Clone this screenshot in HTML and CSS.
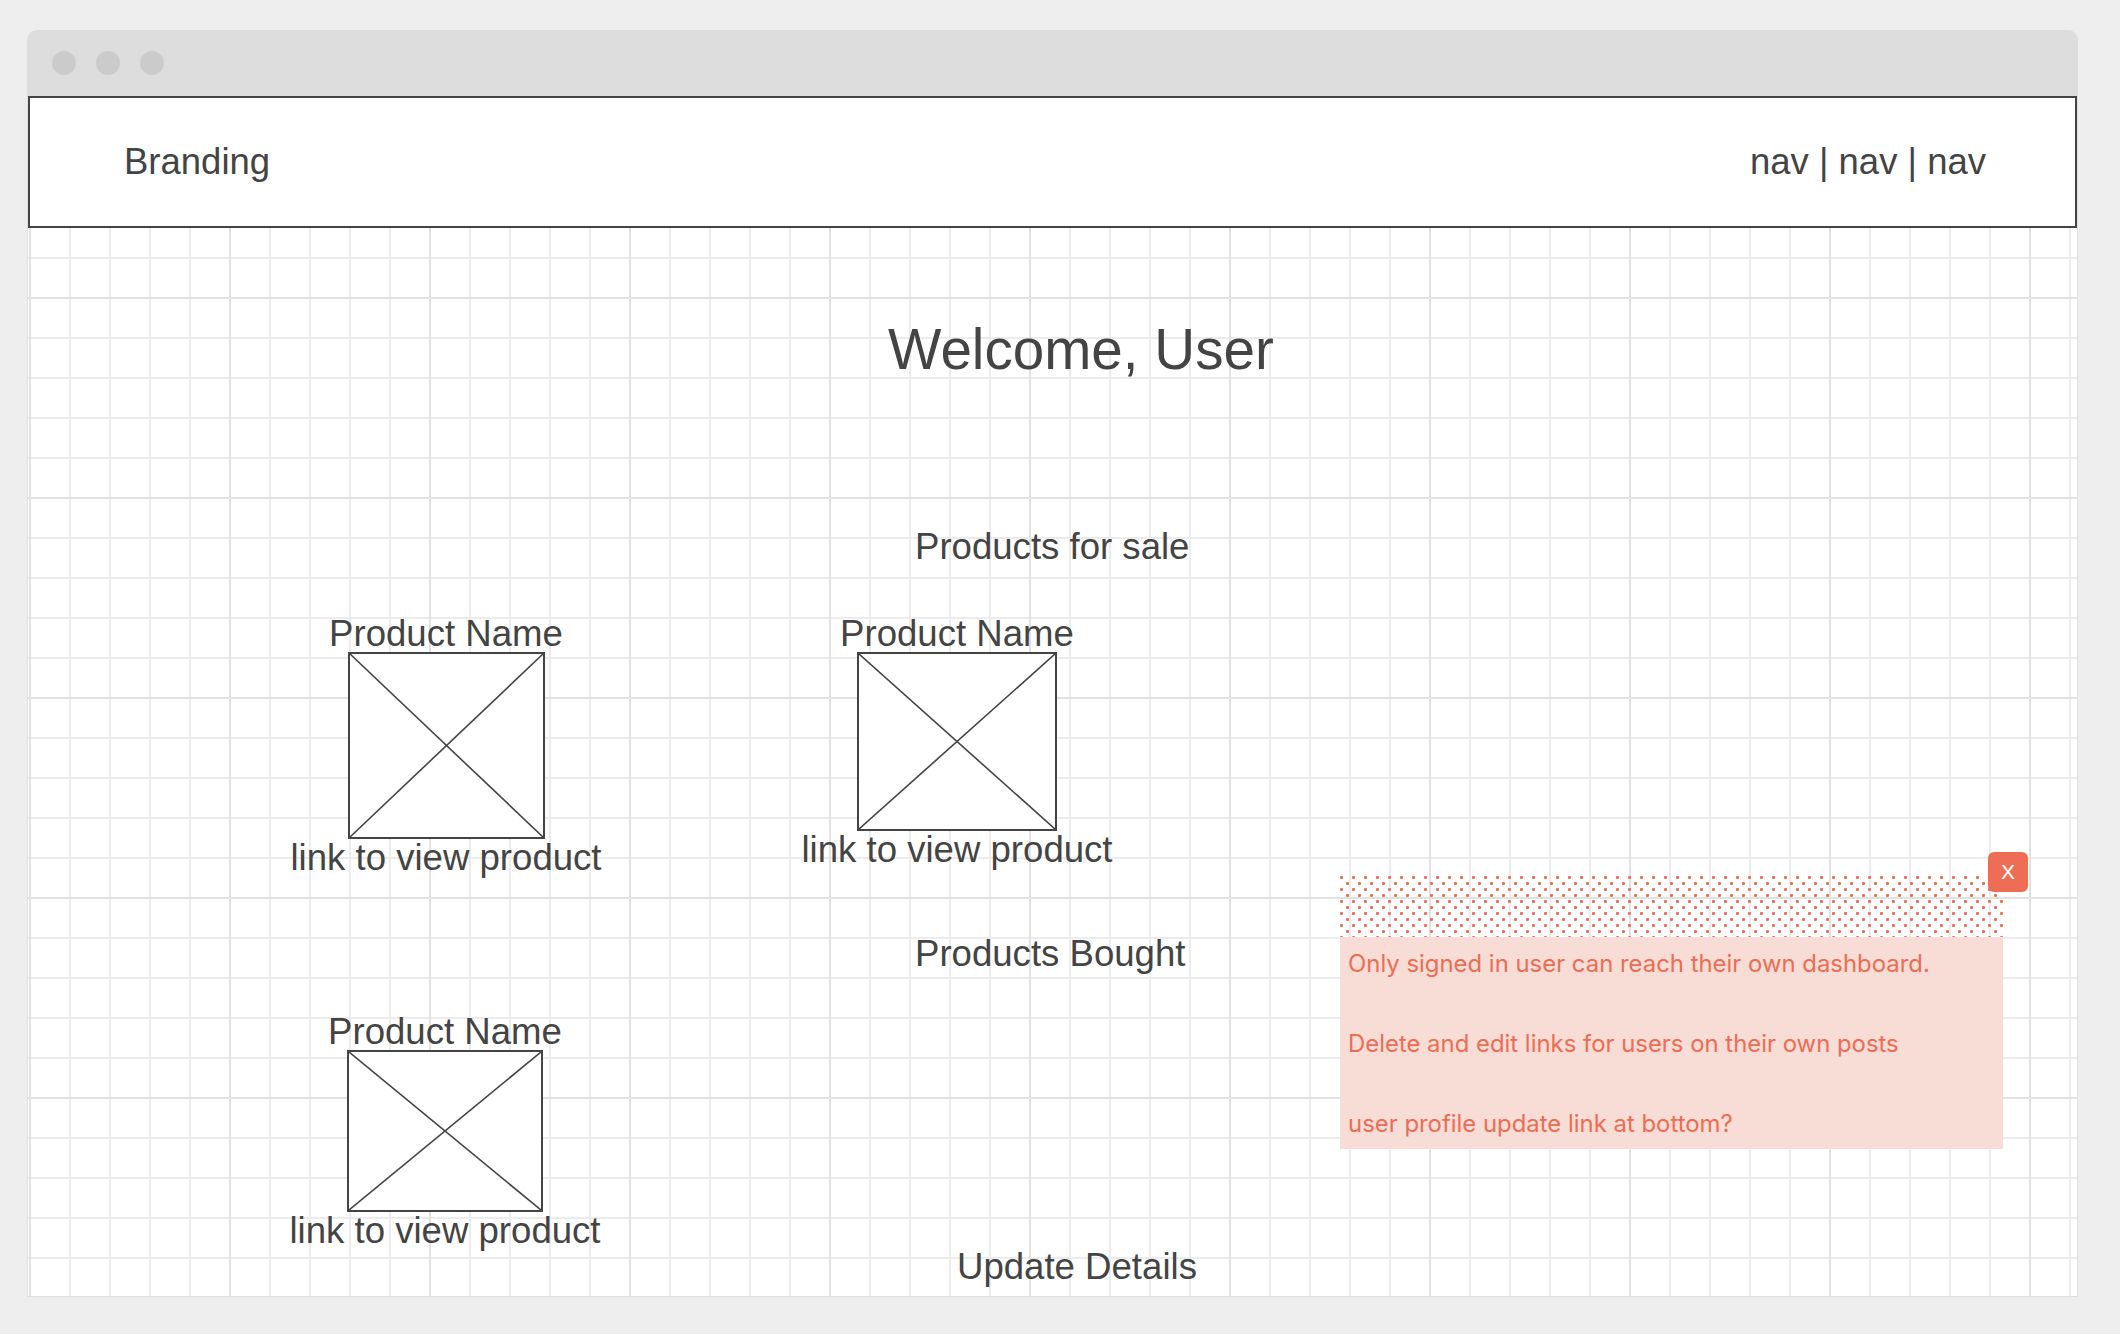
FILE: index.html
```html
<!DOCTYPE html>
<html lang="en">
<head>
<meta charset="utf-8">
<title>Dashboard wireframe</title>
<link rel="stylesheet" href="styles.css">
</head>
<body>
<div class="window">
  <div class="titlebar">
    <span class="dot"></span>
    <span class="dot"></span>
    <span class="dot"></span>
  </div>
  <div class="canvas">
    <header class="site-header">
      <div class="brand">Branding</div>
      <nav class="nav">nav | nav | nav</nav>
    </header>

    <h1 class="label welcome">Welcome, User</h1>
    <h2 class="label section sale">Products for sale</h2>

    <div class="product p1">
      <div class="product-name">Product Name</div>
      <div class="placeholder ph1">
        <svg viewBox="0 0 100 100" preserveAspectRatio="none"><line x1="0" y1="0" x2="100" y2="100" vector-effect="non-scaling-stroke"/><line x1="100" y1="0" x2="0" y2="100" vector-effect="non-scaling-stroke"/></svg>
      </div>
      <div class="product-link">link to view product</div>
    </div>

    <div class="product p2">
      <div class="product-name">Product Name</div>
      <div class="placeholder ph2">
        <svg viewBox="0 0 100 100" preserveAspectRatio="none"><line x1="0" y1="0" x2="100" y2="100" vector-effect="non-scaling-stroke"/><line x1="100" y1="0" x2="0" y2="100" vector-effect="non-scaling-stroke"/></svg>
      </div>
      <div class="product-link">link to view product</div>
    </div>

    <h2 class="label section bought">Products Bought</h2>

    <div class="product p3">
      <div class="product-name">Product Name</div>
      <div class="placeholder ph3">
        <svg viewBox="0 0 100 100" preserveAspectRatio="none"><line x1="0" y1="0" x2="100" y2="100" vector-effect="non-scaling-stroke"/><line x1="100" y1="0" x2="0" y2="100" vector-effect="non-scaling-stroke"/></svg>
      </div>
      <div class="product-link">link to view product</div>
    </div>

    <h2 class="label section update">Update Details</h2>

    <aside class="note">
      <div class="note-handle"></div>
      <div class="note-body">
        <p>Only signed in user can reach their own dashboard.</p>
        <p>Delete and edit links for users on their own posts</p>
        <p>user profile update link at bottom?</p>
      </div>
      <button class="note-close" type="button">X</button>
    </aside>
  </div>
</div>
</body>
</html>
```
FILE: styles.css
```css
* { box-sizing: border-box; }

html, body {
  margin: 0;
  padding: 0;
}

body {
  background: #eeeeee;
  font-family: "Liberation Sans", Arial, sans-serif;
  color: #444444;
  width: 2120px;
  height: 1334px;
  overflow: hidden;
}

.window {
  margin: 30px 0 0 27px;
  width: 2051px;
}

.titlebar {
  height: 66px;
  background: #dddddd;
  border-radius: 10px 10px 0 0;
  display: flex;
  align-items: center;
  gap: 20px;
  padding-left: 25px;
}

.dot {
  width: 24px;
  height: 24px;
  border-radius: 50%;
  background: #cbcbcb;
}

.canvas {
  position: relative;
  height: 1201px;
  border: 1px solid #e0e0e0;
  border-top: none;
  background-color: #ffffff;
  background-image:
    linear-gradient(to right, #e2e2e2 2px, transparent 2px),
    linear-gradient(to bottom, #e2e2e2 2px, transparent 2px),
    linear-gradient(to right, #ececec 2px, transparent 2px),
    linear-gradient(to bottom, #ececec 2px, transparent 2px);
  background-size: 200px 200px, 200px 200px, 40px 40px, 40px 40px;
  background-position: 1px 1px;
}

.site-header {
  height: 132px;
  background: #ffffff;
  border: 2px solid #444444;
  display: flex;
  align-items: center;
  justify-content: space-between;
  padding: 0 89px 0 94px;
  font-size: 36.5px;
  line-height: 36px;
}

.label {
  position: absolute;
  margin: 0;
  font-weight: normal;
  line-height: 1;
  white-space: nowrap;
}

.welcome {
  font-size: 56.6px;
  left: 860px;
  top: 226px;
}

.section {
  font-size: 36.6px;
}

.sale { left: 887px; top: 433px; }
.bought { left: 887px; top: 840px; }
.update { left: 929px; top: 1153px; }

.product {
  position: absolute;
  width: 360px;
  display: flex;
  flex-direction: column;
  align-items: center;
  font-size: 36.6px;
  line-height: 36px;
  white-space: nowrap;
}

.p1 { left: 238px; top: 520px; }
.p2 { left: 749px; top: 520px; }
.p3 { left: 237px; top: 918px; }

.product-link { margin-top: 1px; }

.placeholder {
  border: 2px solid #444444;
  background: #ffffff;
}

.placeholder svg {
  display: block;
  width: 100%;
  height: 100%;
  stroke: #444444;
  stroke-width: 1.6;
}

.ph1 { width: 197px; height: 187px; }
.ph2 { width: 200px; height: 179px; }
.ph3 { width: 196px; height: 162px; }

.note {
  position: absolute;
  left: 1312px;
  top: 780px;
  width: 663px;
}

.note-handle {
  height: 61px;
  background-image:
    radial-gradient(circle at 1.5px 1.5px, #ee6e55 1.3px, transparent 1.7px),
    radial-gradient(circle at 1.5px 1.5px, #ee6e55 1.3px, transparent 1.7px);
  background-size: 12px 12px, 12px 12px;
  background-position: 0 0, 6px 6px;
}

.note-body {
  height: 212px;
  background: #f8dcd6;
  color: #ec6d53;
  font-family: Inter, "Noto Sans", sans-serif;
  font-size: 23.9px;
  line-height: 30px;
  padding: 12px 8px 0;
}

.note-body p {
  margin: 0 0 50px;
  white-space: nowrap;
}

.note-close {
  position: absolute;
  left: 648px;
  top: -24px;
  width: 40px;
  height: 40px;
  border: none;
  border-radius: 6px;
  background: #ee6e55;
  color: #ffffff;
  font-family: "Liberation Sans", Arial, sans-serif;
  font-size: 21px;
  line-height: 40px;
  padding: 0;
  text-align: center;
}
```
